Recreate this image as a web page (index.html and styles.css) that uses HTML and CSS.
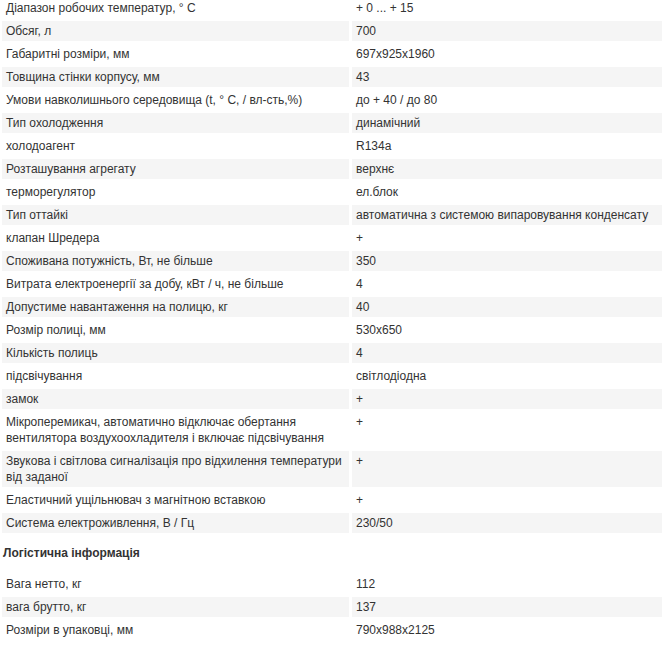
FILE: index.html
```html
<!DOCTYPE html>
<html lang="uk">
<head>
<meta charset="utf-8">
<link rel="stylesheet" href="styles.css">
</head>
<body>
<div class="page">
<table class="specs specs-main">
<tbody>
<tr><td class="name">Діапазон робочих температур, ° C</td><td class="val">+ 0 ... + 15</td></tr>
<tr><td class="name">Обсяг, л</td><td class="val">700</td></tr>
<tr><td class="name">Габаритні розміри, мм</td><td class="val">697x925x1960</td></tr>
<tr><td class="name">Товщина стінки корпусу, мм</td><td class="val">43</td></tr>
<tr><td class="name">Умови навколишнього середовища (t, ° C, / вл-сть,%)</td><td class="val">до + 40 / до 80</td></tr>
<tr><td class="name">Тип охолодження</td><td class="val">динамічний</td></tr>
<tr><td class="name">холодоагент</td><td class="val">R134a</td></tr>
<tr><td class="name">Розташування агрегату</td><td class="val">верхнє</td></tr>
<tr><td class="name">терморегулятор</td><td class="val">ел.блок</td></tr>
<tr><td class="name">Тип оттайкі</td><td class="val">автоматична з системою випаровування конденсату</td></tr>
<tr><td class="name">клапан Шредера</td><td class="val">+</td></tr>
<tr><td class="name">Споживана потужність, Вт, не більше</td><td class="val">350</td></tr>
<tr><td class="name">Витрата електроенергії за добу, кВт / ч, не більше</td><td class="val">4</td></tr>
<tr><td class="name">Допустиме навантаження на полицю, кг</td><td class="val">40</td></tr>
<tr><td class="name">Розмір полиці, мм</td><td class="val">530x650</td></tr>
<tr><td class="name">Кількість полиць</td><td class="val">4</td></tr>
<tr><td class="name">підсвічування</td><td class="val">світлодіодна</td></tr>
<tr><td class="name">замок</td><td class="val">+</td></tr>
<tr><td class="name">Мікроперемикач, автоматично відключає обертання вентилятора воздухоохладителя і включає підсвічування</td><td class="val">+</td></tr>
<tr><td class="name">Звукова і світлова сигналізація про відхилення температури від заданої</td><td class="val">+</td></tr>
<tr><td class="name">Еластичний ущільнювач з магнітною вставкою</td><td class="val">+</td></tr>
<tr><td class="name">Система електроживлення, В / Гц</td><td class="val">230/50</td></tr>
</tbody>
</table>
<h3 class="group-title">Логістична інформація</h3>
<table class="specs">
<tbody>
<tr><td class="name">Вага нетто, кг</td><td class="val">112</td></tr>
<tr><td class="name">вага брутто, кг</td><td class="val">137</td></tr>
<tr><td class="name">Розміри в упаковці, мм</td><td class="val">790x988x2125</td></tr>
</tbody>
</table>
</div>
</body>
</html>
```
FILE: styles.css
```css
html, body {
  margin: 0;
  padding: 0;
  background: #fff;
}
body {
  font-family: "Liberation Sans", Arial, sans-serif;
  font-size: 12px;
  line-height: 16px;
  color: #333;
}
.page {
  width: 671px;
  margin-left: -1px;
}
.specs {
  border-collapse: separate;
  border-spacing: 3px;
  width: 100%;
  table-layout: fixed;
}
.specs-main {
  margin-top: -5px;
}
.specs td {
  padding: 2px 4px;
  vertical-align: top;
  text-align: left;
}
.specs td.name {
  width: 339px;
}
.specs tr:nth-child(even) td {
  background: #f5f5f5;
}
.group-title {
  margin: 0;
  padding: 9px 0 10px 4px;
  font-size: 12px;
  line-height: 16px;
  font-weight: bold;
  color: #333;
}
```
